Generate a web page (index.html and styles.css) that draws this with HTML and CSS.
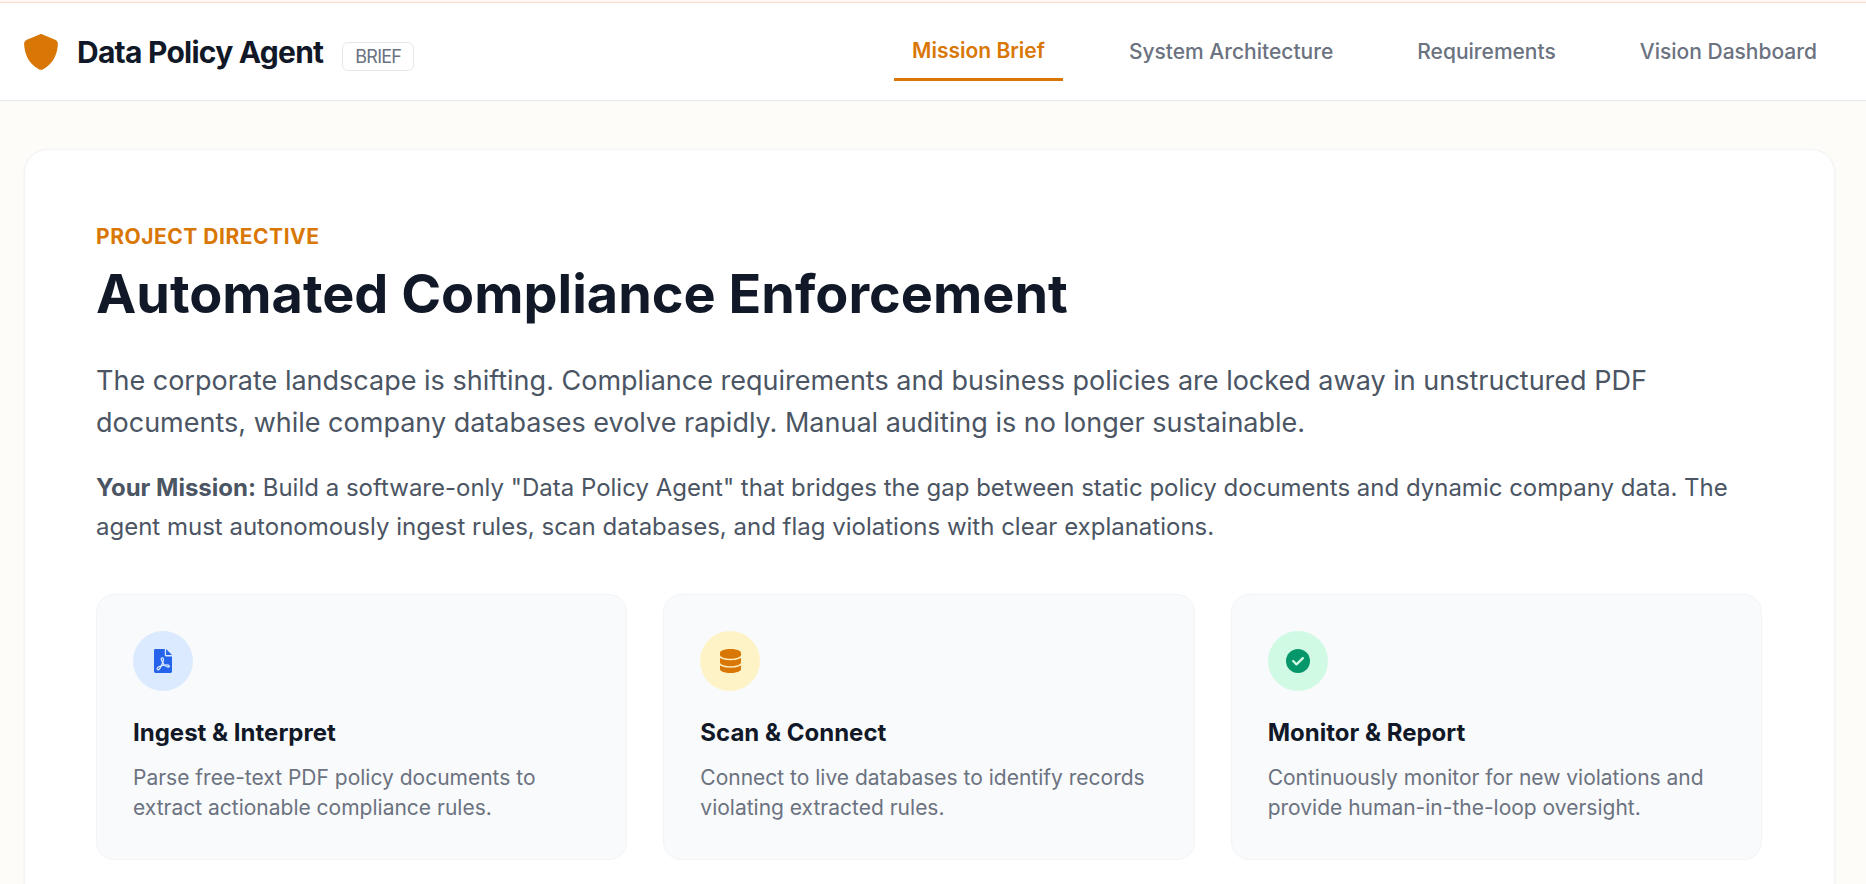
FILE: index.html
```html
<!DOCTYPE html>
<html lang="en">
<head>
    <meta charset="UTF-8">
    <meta name="viewport" content="width=device-width, initial-scale=1.0">
    <title>Data Policy Agent</title>
    <link rel="stylesheet" href="styles.css">
</head>
<body>
    <div class="top-strip"></div>
    <header class="header">
        <div class="brand">
            <svg class="brand-icon" viewBox="0 0 512 512"><path fill="currentColor" d="M269.4 2.9C265.2 1 260.7 0 256 0s-9.2 1-13.4 2.9L54.3 82.8c-22 9.3-38.4 31-38.3 57.2c.5 99.2 41.3 280.7 213.6 363.2c16.7 8 36.1 8 52.8 0C454.7 420.7 495.5 239.2 496 140c.1-26.2-16.3-47.9-38.3-57.2L269.4 2.9z"/></svg>
            <span class="brand-name">Data Policy Agent</span>
            <span class="badge">BRIEF</span>
        </div>
        <nav class="nav">
            <a class="nav-link active">Mission Brief</a>
            <a class="nav-link">System Architecture</a>
            <a class="nav-link">Requirements</a>
            <a class="nav-link">Vision Dashboard</a>
        </nav>
    </header>

    <main class="main">
        <section class="panel">
            <div class="eyebrow">PROJECT DIRECTIVE</div>
            <h1>Automated Compliance Enforcement</h1>
            <p class="lead">The corporate landscape is shifting. Compliance requirements and business policies are locked away in unstructured PDF documents, while company databases evolve rapidly. Manual auditing is no longer sustainable.</p>
            <p class="mission"><strong>Your Mission:</strong> Build a software-only "Data Policy Agent" that bridges the gap between static policy documents and dynamic company data. The agent must autonomously ingest rules, scan databases, and flag violations with clear explanations.</p>

            <div class="features">
                <div class="feature">
                    <div class="feature-icon blue">
                        <svg viewBox="0 0 384 512">
                            <path fill="currentColor" d="M256 160h128v322c0 16.500-13.500 30-30 30H30c-16.500 0-30-13.500-30-30V30C0 13.500 13.500 0 30 0h200v134c0 14.400 11.600 26 26 26zM258 0v128h126z"/>
                            <path class="pdf-mark" d="M190 290C145 240 145 187 178 187s33 50 0 120c-20 50-50 115-80 132s-50-25-12-50c45-30 125-50 185-50s75 45 35 45c-50 0-100-50-116-94"/>
                        </svg>
                    </div>
                    <h3>Ingest &amp; Interpret</h3>
                    <p>Parse free-text PDF policy documents to extract actionable compliance rules.</p>
                </div>
                <div class="feature">
                    <div class="feature-icon amber">
                        <svg viewBox="0 0 448 512"><path fill="currentColor" d="M448 80v48c0 44.200-100.300 80-224 80S0 172.200 0 128V80C0 35.800 100.300 0 224 0S448 35.800 448 80zM393.200 214.700c20.800-7.400 39.900-16.900 54.800-28.600V288c0 44.200-100.300 80-224 80S0 332.200 0 288V186.100c14.900 11.800 34 21.200 54.800 28.600C99.700 230.700 159.500 240 224 240s124.300-9.300 169.200-25.300zM0 346.100c14.900 11.800 34 21.200 54.800 28.600C99.700 390.700 159.500 400 224 400s124.300-9.300 169.200-25.300c20.800-7.400 39.900-16.900 54.800-28.600V432c0 44.200-100.300 80-224 80S0 476.200 0 432V346.100z"/></svg>
                    </div>
                    <h3>Scan &amp; Connect</h3>
                    <p>Connect to live databases to identify records violating extracted rules.</p>
                </div>
                <div class="feature">
                    <div class="feature-icon green">
                        <svg viewBox="0 0 512 512">
                            <circle cx="256" cy="256" r="256" fill="currentColor"/>
                            <path class="check-mark" d="M152 256l72 72 136-134"/>
                        </svg>
                    </div>
                    <h3>Monitor &amp; Report</h3>
                    <p>Continuously monitor for new violations and provide human-in-the-loop oversight.</p>
                </div>
            </div>
        </section>
    </main>
</body>
</html>
```
FILE: styles.css
```css
* {
    box-sizing: border-box;
    margin: 0;
    padding: 0;
}
body {
    height: 884px;
    overflow: hidden;
    font-family: Inter, "Liberation Sans", sans-serif;
    background-color: #fdfcf8;
    color: #374151;
}
.top-strip {
    height: 3px;
    background-color: #fff7f3;
    border-bottom: 1px solid #fbddd0;
}
.header {
    display: flex;
    justify-content: space-between;
    align-items: center;
    height: 98px;
    padding: 0 31px 0 24px;
    background-color: #fff;
    border-bottom: 1px solid #e5e7eb;
}
.brand {
    display: flex;
    align-items: center;
}
.brand-icon {
    width: 36px;
    height: 36px;
    margin-right: 18px;
    margin-left: -1px;
    color: #d97706;
}
.brand-name {
    font-size: 30px;
    line-height: 42px;
    font-weight: 700;
    letter-spacing: -0.75px;
    color: #111827;
}
.badge {
    margin-left: 19px;
    margin-top: 10px;
    padding: 2px 12px;
    font-size: 18px;
    line-height: 23px;
    letter-spacing: -0.75px;
    color: #6b7280;
    border: 1px solid #e5e7eb;
    border-radius: 6px;
}
.nav {
    display: flex;
    align-items: center;
    gap: 48px;
}
.nav-link {
    padding: 12px 18px;
    font-size: 21px;
    line-height: 30px;
    font-weight: 500;
    color: #6b7280;
}
.nav-link.active {
    margin-top: 2px;
    font-weight: 600;
    color: #d97706;
    border-bottom: 3px solid #d97706;
}
.main {
    padding: 48px 31px 48px 24px;
}
.panel {
    padding: 72px 72px 72px 71px;
    background-color: #fff;
    border: 1px solid #f3f4f6;
    border-radius: 24px;
    box-shadow: 0 1px 3px rgba(0, 0, 0, 0.05);
}
.eyebrow {
    font-size: 21px;
    line-height: 30px;
    font-weight: 700;
    letter-spacing: 0.525px;
    color: #d97706;
}
h1 {
    margin-top: 12px;
    font-size: 54px;
    line-height: 60px;
    font-weight: 700;
    color: #111827;
}
.lead {
    margin-top: 36px;
    font-size: 27px;
    line-height: 42px;
    color: #4b5563;
}
.mission {
    margin-top: 24px;
    font-size: 24px;
    line-height: 39px;
    color: #4b5563;
}
.features {
    display: grid;
    grid-template-columns: repeat(3, 1fr);
    gap: 36px;
    margin-top: 48px;
}
.feature {
    padding: 36px;
    background-color: #f9fafb;
    border: 1px solid #f3f4f6;
    border-radius: 18px;
}
.feature-icon {
    display: flex;
    align-items: center;
    justify-content: center;
    width: 60px;
    height: 60px;
    margin-bottom: 24px;
    border-radius: 50%;
}
.feature-icon svg {
    height: 24px;
}
.blue {
    background-color: #dbeafe;
    color: #2563eb;
}
.amber {
    background-color: #fef3c7;
    color: #d97706;
}
.green {
    background-color: #d1fae5;
    color: #059669;
}
.pdf-mark {
    fill: none;
    stroke: #dbeafe;
    stroke-width: 27;
    stroke-linejoin: round;
}
.check-mark {
    fill: none;
    stroke: #d1fae5;
    stroke-width: 48;
    stroke-linecap: round;
    stroke-linejoin: round;
}
.feature h3 {
    margin-bottom: 12px;
    font-size: 24px;
    line-height: 36px;
    font-weight: 700;
    color: #111827;
}
.feature p {
    font-size: 21px;
    line-height: 30px;
    color: #6b7280;
}
```
